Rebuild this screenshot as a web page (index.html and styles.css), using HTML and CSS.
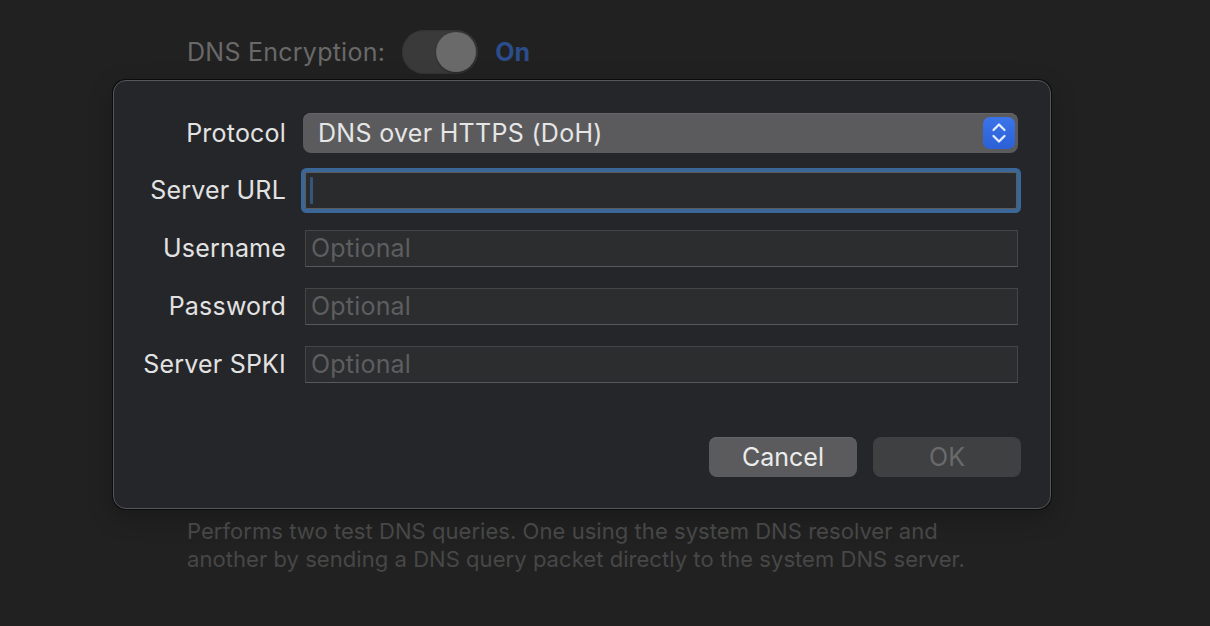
FILE: index.html
```html
<!DOCTYPE html>
<html>
<head>
<meta charset="utf-8">
<link rel="stylesheet" href="styles.css">
</head>
<body>
<div class="page">
  <div class="header">
    <span class="header-label">DNS Encryption:</span>
    <span class="toggle"><span class="knob"></span></span>
    <span class="toggle-state">On</span>
  </div>

  <div class="dialog">
    <div class="form">
      <div class="label">Protocol</div>
      <div class="cell">
        <div class="popup">
          <span class="popup-text">DNS over HTTPS (DoH)</span>
          <span class="stepper">
            <svg width="22" height="28" viewBox="0 0 22 28">
              <path d="M5.5 11 L11 5.5 L16.5 11" fill="none" stroke="#e4ebfa" stroke-width="2.3" stroke-linecap="round" stroke-linejoin="round"/>
              <path d="M5.5 17 L11 22.5 L16.5 17" fill="none" stroke="#e4ebfa" stroke-width="2.3" stroke-linecap="round" stroke-linejoin="round"/>
            </svg>
          </span>
        </div>
      </div>

      <div class="label">Server URL</div>
      <div class="cell">
        <div class="field focused"><span class="caret"></span></div>
      </div>

      <div class="label">Username</div>
      <div class="cell"><div class="field"><span class="placeholder">Optional</span></div></div>

      <div class="label">Password</div>
      <div class="cell"><div class="field"><span class="placeholder">Optional</span></div></div>

      <div class="label">Server SPKI</div>
      <div class="cell"><div class="field"><span class="placeholder">Optional</span></div></div>
    </div>

    <div class="buttons">
      <div class="btn btn-cancel">Cancel</div>
      <div class="btn btn-ok">OK</div>
    </div>
  </div>

  <p class="description">Performs two test DNS queries. One using the system DNS resolver and<br>another by sending a DNS query packet directly to the system DNS server.</p>
</div>
</body>
</html>
```

FILE: styles.css
```css
html, body {
  margin: 0;
  padding: 0;
  background: #212121;
}

body {
  font-family: Inter, "Noto Sans", "Liberation Sans", sans-serif;
  width: 1210px;
  height: 626px;
  overflow: hidden;
}

.page {
  display: flex;
  flex-direction: column;
}

.header {
  display: flex;
  align-items: center;
  height: 44px;
  margin-top: 30px;
  padding-left: 187px;
}

.header-label {
  font-size: 25px;
  letter-spacing: 0.25px;
  color: #696969;
}

.toggle {
  display: flex;
  align-items: center;
  justify-content: flex-end;
  width: 76px;
  height: 44px;
  box-sizing: border-box;
  padding: 0 2px;
  margin-left: 17px;
  border-radius: 22px;
  background: #3a3a3a;
  box-shadow: inset 0 0 0 1px #333;
}

.knob {
  width: 40px;
  height: 40px;
  border-radius: 50%;
  background: #6a6a6a;
  box-shadow: 0 1px 2px rgba(0,0,0,0.35);
}

.toggle-state {
  margin-left: 17px;
  font-size: 25px;
  font-weight: 700;
  color: #2b4d8c;
}

.dialog {
  margin-top: 6px;
  margin-left: 113px;
  width: 938px;
  height: 429px;
  box-sizing: border-box;
  border: 1px solid #56575a;
  border-radius: 13px;
  background: #252629;
  box-shadow: 0 0 0 1px #0c0c0c, 0 8px 24px rgba(0,0,0,0.25);
  padding: 23px 30px 0 32px;
  display: flex;
  flex-direction: column;
}

.form {
  display: grid;
  grid-template-columns: 140px 716px;
  grid-template-rows: 57px 58px 58px 58px 58px;
  column-gap: 17px;
}

.label {
  display: flex;
  align-items: center;
  justify-content: flex-end;
  font-size: 25px;
  letter-spacing: 0.2px;
  color: #e2e2e2;
  white-space: nowrap;
}

.cell {
  display: flex;
  align-items: center;
}

.popup {
  display: flex;
  align-items: center;
  justify-content: space-between;
  width: 715px;
  height: 40px;
  box-sizing: border-box;
  padding: 0 3px 0 15px;
  border-radius: 8px;
  background: #5b5b5d;
  box-shadow: inset 0 1px 0 #666668;
}

.popup-text {
  font-size: 25px;
  letter-spacing: 0.3px;
  color: #e6e6e6;
}

.stepper {
  display: flex;
  align-items: center;
  justify-content: center;
  width: 32px;
  height: 32px;
  border-radius: 7px;
  background: linear-gradient(#3b74ea, #2b60d6);
}

.field {
  display: flex;
  align-items: center;
  width: 713px;
  height: 37px;
  margin-left: 2px;
  box-sizing: border-box;
  padding-left: 5px;
  background: #2c2d2f;
  border: 1px solid #444547;
  border-bottom-color: #58595b;
}

.field.focused {
  width: 712px;
  background: #2a2b2d;
  border-color: #5a5b5d;
  border-radius: 2px;
  box-shadow: 0 0 0 4px #3a6797;
  padding-left: 4px;
}

.caret {
  width: 3px;
  height: 27px;
  background: #36557d;
  border-radius: 1px;
}

.placeholder {
  font-size: 25px;
  letter-spacing: 0.2px;
  color: #5d5e60;
}

.buttons {
  display: flex;
  justify-content: flex-end;
  gap: 16px;
  margin-top: 44px;
  margin-right: -1px;
}

.btn {
  width: 148px;
  height: 40px;
  border-radius: 8px;
  display: flex;
  align-items: center;
  justify-content: center;
  font-size: 25px;
}

.btn-cancel {
  background: #5b5b5d;
  color: #ececec;
  box-shadow: inset 0 1px 0 #646466;
}

.btn-ok {
  background: #3f4042;
  color: #6a6a6c;
}

.description {
  margin: 8px 0 0 187px;
  font-size: 22px;
  letter-spacing: 0.05px;
  line-height: 28px;
  color: #474747;
}
```
